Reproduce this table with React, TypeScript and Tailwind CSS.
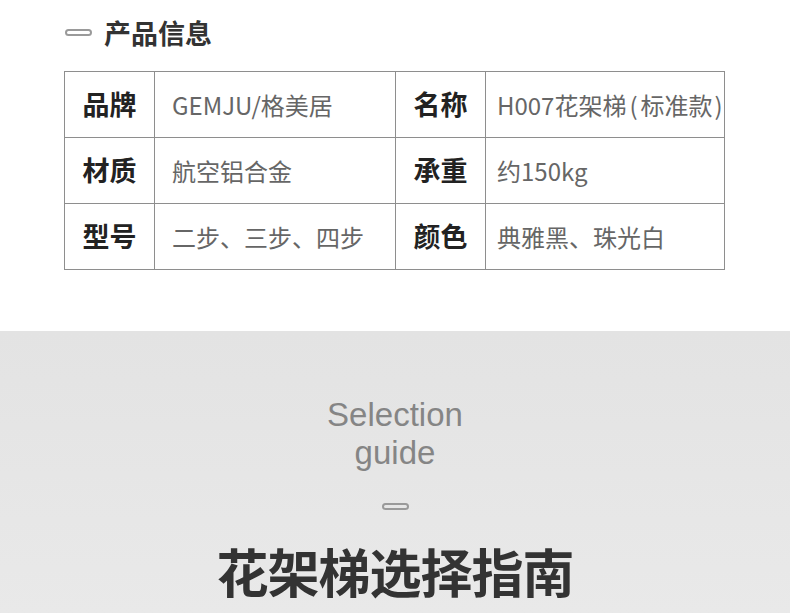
const rows = [
  ['品牌', 'GEMJU/格美居', '名称', null],
  ['材质', '航空铝合金', '承重', '约150kg'],
  ['型号', '二步、三步、四步', '颜色', '典雅黑、珠光白'],
];

const cjk = "font-['Noto_Sans_CJK_SC','Noto_Sans',sans-serif]";

const Pill = () => (
  <div className="w-[27px] h-[7px] rounded-full border-2 border-[#9a9a9a]" />
);

// name cell: parens sit a little apart from the CJK chars
const Name = () => (
  <>
    H007花架梯<span className="ml-[3px] mr-[3px]">(</span>标准款<span className="ml-[2px]">)</span>
  </>
);

const App = () => {
  return (
    <div className={`w-[790px] h-[613px] overflow-hidden bg-white ${cjk}`}>
      {/* 产品信息 */}
      <div className="h-[331px] pt-[14px] pl-[65px]">
        <div className="flex items-center gap-[12px] h-[36px]">
          <Pill />
          <h2 className="text-[27px] leading-none font-bold text-[#333]">产品信息</h2>
        </div>

        <div className="mt-[21px] ml-[-1px] w-[661px] border-l border-t border-[#8e8e8e] grid grid-cols-[90px_241px_90px_239px]">
          {rows.map((r, i) => (
            <div key={i} className="contents">
              <div className="h-[66px] border-r border-b border-[#8e8e8e] flex items-center justify-center text-[27px] font-bold text-[#222]">
                {r[0]}
              </div>
              <div className="h-[66px] border-r border-b border-[#8e8e8e] flex items-center pl-[17px] text-[24px] text-[#666]">
                {r[1]}
              </div>
              <div className="h-[66px] border-r border-b border-[#8e8e8e] flex items-center justify-center text-[27px] font-bold text-[#222]">
                {r[2]}
              </div>
              <div className="h-[66px] border-r border-b border-[#8e8e8e] flex items-center pl-[11px] text-[24px] text-[#666] whitespace-nowrap">
                {r[3] ?? <Name />}
              </div>
            </div>
          ))}
        </div>
      </div>

      {/* Selection guide */}
      <div className="h-[282px] bg-gradient-to-b from-[#e3e3e3] to-[#e9e9e9] flex flex-col items-center pt-[65px]">
        <p className="font-['Liberation_Sans',Arial,sans-serif] text-[33px] leading-[38px] text-[#858585] text-center">
          Selection
          <br />
          guide
        </p>
        <div className="mt-[31px]">
          <Pill />
        </div>
        <h1 className="mt-[35px] text-[52px] leading-[52px] font-bold text-[#333] tracking-[-1px]">
          花架梯选择指南
        </h1>
      </div>
    </div>
  );
};

export default App;
